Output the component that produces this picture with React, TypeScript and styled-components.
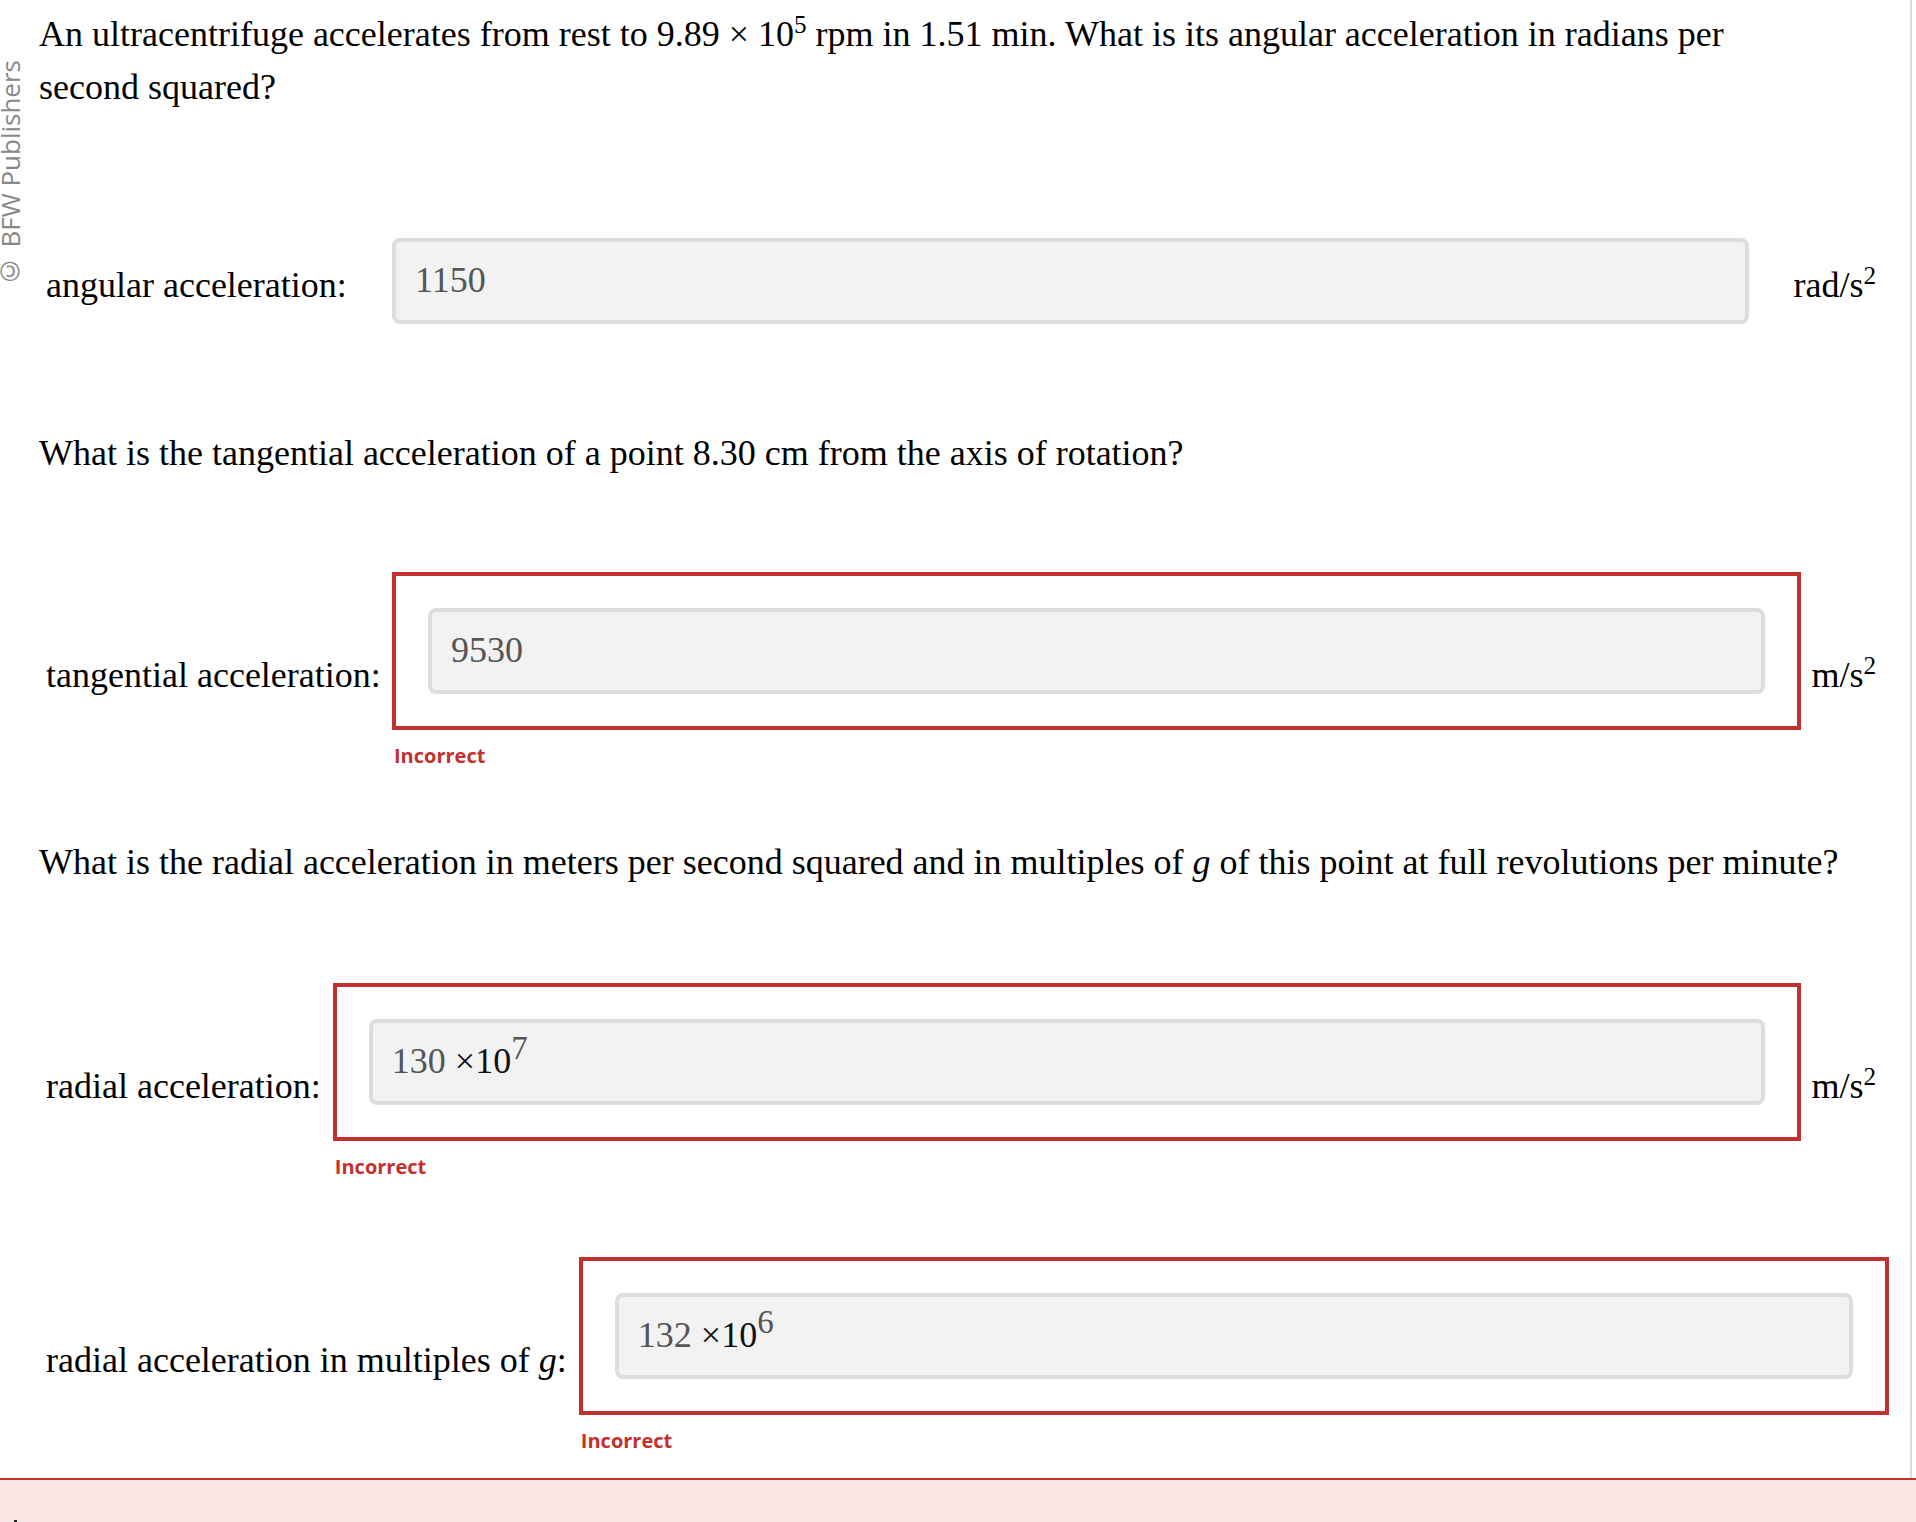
import * as React from 'react';
import styled, { createGlobalStyle } from 'styled-components';

const GlobalStyle = createGlobalStyle`
    html, body {
        margin: 0;
        padding: 0;
        background: #ffffff;
        overflow: hidden;
    }
    body {
        font-family: "Liberation Serif", "Times New Roman", serif;
        color: #000;
    }
`;

const RED = '#c3302e';

const Panel = styled.main`
    position: relative;
    box-sizing: border-box;
    width: 1912px;
    padding: 8px 21px 15px 39px;
    border-right: 2px solid #dadada;
`;

// Rotated copyright note along the left edge
const Watermark = styled.div`
    position: absolute;
    left: -3px;
    top: 60px;
    writing-mode: vertical-rl;
    transform: rotate(180deg);
    font-family: "Open Sans", "DejaVu Sans", sans-serif;
    font-size: 26px;
    line-height: 26px;
    color: #888888;
    white-space: nowrap;
`;

const Prompt = styled.p<{ $gap?: number; $maxWidth?: number }>`
    margin: ${p => p.$gap ?? 0}px 0 0 0;
    max-width: ${p => (p.$maxWidth ? `${p.$maxWidth}px` : 'none')};
    font-size: 36px;
    line-height: 53px;
`;

const Sup = styled.sup`
    font-size: 0.7em;
    line-height: 0;
`;

const AnswerRow = styled.div<{ $gap: number }>`
    display: flex;
    align-items: center;
    margin-top: ${p => p.$gap}px;
    padding-left: 7px;
`;

const Label = styled.div<{ $width?: number }>`
    flex-shrink: 0;
    width: ${p => (p.$width ? `${p.$width}px` : 'auto')};
    margin-right: 12px;
    font-size: 36px;
    white-space: nowrap;
`;

const FieldColumn = styled.div`
    flex: 1;
    min-width: 0;
    padding-bottom: 7px;
`;

const Flagged = styled.div`
    border: 4px solid ${RED};
    padding: 32px;
`;

const InputBox = styled.div`
    box-sizing: border-box;
    display: flex;
    align-items: center;
    height: 86px;
    padding: 0 19px 3px 19px;
    border: 4px solid #dddddd;
    border-radius: 8px;
    background: #f2f2f2;
    font-size: 36px;
    color: #555555;
`;

const InputText = styled.span`
    white-space: pre;
`;

const Times = styled.span`
    color: #111111;
`;

const Exponent = styled.span`
    font-size: 33px;
    vertical-align: 14px;
    line-height: 0;
    color: #555555;
`;

const Feedback = styled.div`
    margin: 12px 0 2px 0;
    padding-left: 2px;
    font-family: "Open Sans", "DejaVu Sans", sans-serif;
    font-weight: 700;
    font-size: 20px;
    color: ${RED};
`;

const Unit = styled.div<{ $width: number }>`
    box-sizing: border-box;
    flex-shrink: 0;
    width: ${p => p.$width}px;
    padding-right: 13px;
    text-align: right;
    font-size: 36px;
    white-space: nowrap;
`;

const Banner = styled.div`
    width: 1916px;
    height: 80px;
    border-top: 2px solid ${RED};
    background: #fbe6e6;
    padding: 40px 0 0 14px;
    box-sizing: border-box;
`;

const BannerMark = styled.span`
    display: block;
    width: 3px;
    height: 10px;
    background: #222;
`;

interface Answer {
    value: string;
    exponent?: string;
}

function Value({ value, exponent }: Answer) {
    return (
        <InputBox>
            <InputText>
                {value}
                {exponent && (
                    <>
                        {' '}
                        <Times>×10</Times>
                        <Exponent>{exponent}</Exponent>
                    </>
                )}
            </InputText>
        </InputBox>
    );
}

export default function App() {
    return (
        <>
            <GlobalStyle />
            <Panel>
                <Watermark>© BFW Publishers</Watermark>

                <Prompt $maxWidth={1720}>
                    An ultracentrifuge accelerates from rest to 9.89 × 10<Sup>5</Sup> rpm in 1.51 min. What is its
                    angular acceleration in radians per second squared?
                </Prompt>

                <AnswerRow $gap={124}>
                    <Label $width={334}>angular acceleration:</Label>
                    <FieldColumn>
                        <Value value="1150" />
                    </FieldColumn>
                    <Unit $width={140}>
                        rad/s<Sup>2</Sup>
                    </Unit>
                </AnswerRow>

                <Prompt $gap={96}>What is the tangential acceleration of a point 8.30 cm from the axis of rotation?</Prompt>

                <AnswerRow $gap={92}>
                    <Label $width={334}>tangential acceleration:</Label>
                    <FieldColumn>
                        <Flagged>
                            <Value value="9530" />
                        </Flagged>
                        <Feedback>Incorrect</Feedback>
                    </FieldColumn>
                    <Unit $width={88}>
                        m/s<Sup>2</Sup>
                    </Unit>
                </AnswerRow>

                <Prompt $gap={58}>
                    What is the radial acceleration in meters per second squared and in multiples of <em>g</em> of
                    this point at full revolutions per minute?
                </Prompt>

                <AnswerRow $gap={94}>
                    <Label>radial acceleration:</Label>
                    <FieldColumn>
                        <Flagged>
                            <Value value="130" exponent="7" />
                        </Flagged>
                        <Feedback>Incorrect</Feedback>
                    </FieldColumn>
                    <Unit $width={88}>
                        m/s<Sup>2</Sup>
                    </Unit>
                </AnswerRow>

                <AnswerRow $gap={68}>
                    <Label>
                        radial acceleration in multiples of <em>g</em>:
                    </Label>
                    <FieldColumn>
                        <Flagged>
                            <Value value="132" exponent="6" />
                        </Flagged>
                        <Feedback>Incorrect</Feedback>
                    </FieldColumn>
                </AnswerRow>
            </Panel>
            <Banner>
                <BannerMark />
            </Banner>
        </>
    );
}
